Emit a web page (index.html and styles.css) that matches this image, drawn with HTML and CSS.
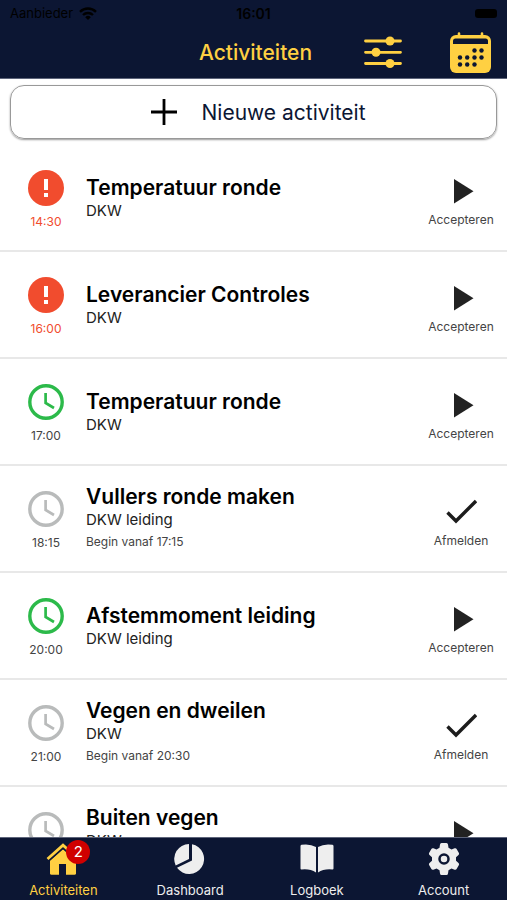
FILE: index.html
```
<!DOCTYPE html>
<html lang="nl">
<head>
  <meta charset="utf-8">
  <meta name="viewport" content="width=device-width, initial-scale=1">
  <title>Activiteiten</title>
  <link rel="stylesheet" href="styles.css">
</head>
<body>
  <!-- shared icons -->
  <svg class="sprite" aria-hidden="true">
    <symbol id="alert" viewBox="0 0 36 36">
      <circle cx="18" cy="18" r="18" fill="#f14c2e"/>
      <path d="M16 9h4v11h-4zM16 23h4v4h-4z" fill="#fff"/>
    </symbol>
    <symbol id="clock" viewBox="0 0 36 36">
      <circle cx="18" cy="18" r="16.2" fill="none" stroke="currentColor" stroke-width="3.4"/>
      <path d="M17.6 9v10l8.4 5" fill="none" stroke="currentColor" stroke-width="2.7"/>
    </symbol>
    <symbol id="play" viewBox="0 0 32 32">
      <path d="M9 4v24.500l19.500-12.250z" fill="#222"/>
    </symbol>
    <symbol id="check" viewBox="0 0 32 32">
      <path d="M2.500 16.500l8.500 8.500L31 5" fill="none" stroke="#1c1c1c" stroke-width="3.400"/>
    </symbol>
  </svg>

  <header class="header">
    <div class="status-bar">
      <span class="carrier">Aanbieder
        <svg width="18" height="13" viewBox="0 0 18 13">
          <path d="M1 4.800a11.500 11.500 0 0 1 16 0M4 8a7.200 7.200 0 0 1 10 0" fill="none" stroke="#000" stroke-width="2.400"/>
          <path d="M9 13L6.200 10.200a4 4 0 0 1 5.600 0z"/>
        </svg>
      </span>
      <span class="clock-time">16:01</span>
      <span class="battery"></span>
    </div>
    <div class="title-bar">
      <h1>Activiteiten</h1>
      <div class="header-buttons">
        <button aria-label="Filter">
          <svg width="38" height="32" viewBox="0 0 38 32">
            <path d="M1.500 5h35M1.500 16.300h35M1.500 27.500h35" stroke="#ffd042" stroke-width="2.800" stroke-linecap="round"/>
            <g fill="#ffd042"><circle cx="26" cy="5" r="4.500"/><circle cx="12" cy="16.300" r="4.500"/><circle cx="26" cy="27.500" r="4.500"/></g>
          </svg>
        </button>
        <button aria-label="Kalender">
          <svg width="41" height="41" viewBox="0 0 41 41">
            <path d="M9 1.500v4M32 1.500v4" stroke="#ffd042" stroke-width="2.600" stroke-linecap="round"/>
            <rect y="3" width="41" height="38" rx="6" fill="#ffd042"/>
            <path d="M5.500 6.500h30q2.500 0 2.500 2.500v3H3V9q0-2.500 2.500-2.500z" fill="#0c1633"/>
            <g fill="#0c1633">
              <circle cx="24.500" cy="18.500" r="2.200"/><circle cx="31.500" cy="18.500" r="2.200"/>
              <circle cx="10" cy="25.500" r="2.200"/><circle cx="17.200" cy="25.500" r="2.200"/><circle cx="24.500" cy="25.500" r="2.200"/><circle cx="31.500" cy="25.500" r="2.200"/>
              <circle cx="10" cy="32.500" r="2.200"/><circle cx="17.200" cy="32.500" r="2.200"/><circle cx="24.500" cy="32.500" r="2.200"/>
            </g>
          </svg>
        </button>
      </div>
    </div>
  </header>

  <main class="content">
    <button class="new-activity">
      <svg width="26" height="26" viewBox="0 0 26 26"><path d="M13 0v26M0 13h26" stroke="#000" stroke-width="2.800"/></svg>
      Nieuwe activiteit
    </button>

    <ul class="activities">
      <li class="activity late">
        <div class="status"><svg><use href="#alert"/></svg><time>14:30</time></div>
        <div class="info"><h2>Temperatuur ronde</h2><p>DKW</p></div>
        <button class="action"><svg><use href="#play"/></svg>Accepteren</button>
      </li>
      <li class="activity late">
        <div class="status"><svg><use href="#alert"/></svg><time>16:00</time></div>
        <div class="info"><h2>Leverancier Controles</h2><p>DKW</p></div>
        <button class="action"><svg><use href="#play"/></svg>Accepteren</button>
      </li>
      <li class="activity open">
        <div class="status"><svg><use href="#clock"/></svg><time>17:00</time></div>
        <div class="info"><h2>Temperatuur ronde</h2><p>DKW</p></div>
        <button class="action"><svg><use href="#play"/></svg>Accepteren</button>
      </li>
      <li class="activity">
        <div class="status"><svg><use href="#clock"/></svg><time>18:15</time></div>
        <div class="info"><h2>Vullers ronde maken</h2><p>DKW leiding</p><small>Begin vanaf 17:15</small></div>
        <button class="action"><svg><use href="#check"/></svg>Afmelden</button>
      </li>
      <li class="activity open">
        <div class="status"><svg><use href="#clock"/></svg><time>20:00</time></div>
        <div class="info"><h2>Afstemmoment leiding</h2><p>DKW leiding</p></div>
        <button class="action"><svg><use href="#play"/></svg>Accepteren</button>
      </li>
      <li class="activity">
        <div class="status"><svg><use href="#clock"/></svg><time>21:00</time></div>
        <div class="info"><h2>Vegen en dweilen</h2><p>DKW</p><small>Begin vanaf 20:30</small></div>
        <button class="action"><svg><use href="#check"/></svg>Afmelden</button>
      </li>
      <li class="activity">
        <div class="status"><svg><use href="#clock"/></svg><time>21:30</time></div>
        <div class="info"><h2>Buiten vegen</h2><p>DKW</p><small>Begin vanaf 21:00</small></div>
        <button class="action"><svg><use href="#play"/></svg>Accepteren</button>
      </li>
    </ul>
  </main>

  <nav class="tabs">
    <a class="active" href="#activiteiten">
      <span class="tab-icon">
        <svg width="34" height="34" viewBox="0 0 34 34" fill="#ffd042">
          <path d="M17 7L4 18.500V31q0 1.500 1.500 1.500H13V22h7v10.500h8.500q1.500 0 1.500-1.500V18.500z"/>
          <path d="M1.500 17L17 3.200 32.500 17" fill="none" stroke="#0c1633" stroke-width="6"/>
          <path d="M1.500 17L17 3.200 32.500 17" fill="none" stroke="#ffd042" stroke-width="2.800"/>
          <path d="M17 9L4 20.500V31q0 1.500 1.500 1.500H13V22h7v10.500h8.500q1.500 0 1.500-1.500V20.500z"/>
          <path d="M25 4h4v8l-4-3.500z"/>
        </svg>
        <span class="badge">2</span>
      </span>
      Activiteiten
    </a>
    <a href="#dashboard">
      <span class="tab-icon">
        <svg width="34" height="34" viewBox="0 0 34 34" fill="#eee">
          <path d="M16 2v15L2.700 23.500A15 15 0 0 1 16 2z"/>
          <path d="M19 2.200a15 15 0 1 1-15 23.600L19 18.600z"/>
        </svg>
      </span>
      Dashboard
    </a>
    <a href="#logboek">
      <span class="tab-icon">
        <svg width="34" height="34" viewBox="0 0 34 34" fill="#eee">
          <path d="M.5 4q0-1 1-1.200Q10 1.500 16 5v25.500Q10 26.500 1.500 27.500q-1 0-1-1zM33.500 4q0-1-1-1.200Q24 1.500 18 5v25.500q6-4 14.500-3 1 0 1-1z"/>
        </svg>
      </span>
      Logboek
    </a>
    <a href="#account">
      <span class="tab-icon">
        <svg width="34" height="34" viewBox="0 0 34 34">
          <path d="M13 2.500q.2-1.500 1.500-1.500h5q1.300 0 1.500 1.500l.5 3.300 3 1.700 3.100-1.200q1.400-.5 2 .6l2.300 4q.6 1.200-.4 2L29 15.200v3.600l2.500 2.300q1 .8.400 2l-2.300 4q-.6 1.100-2 .6l-3.100-1.200-3 1.700-.5 3.300q-.2 1.500-1.500 1.500h-5q-1.300 0-1.500-1.500l-.5-3.300-3-1.700-3.100 1.200q-1.400.5-2-.6l-2.300-4q-.6-1.200.4-2L5 18.800v-3.600l-2.500-2.300q-1-.8-.4-2l2.300-4q.6-1.100 2-.6l3.100 1.200 3-1.700z" fill="#eee"/>
          <circle cx="17" cy="17" r="4.500" fill="#eee" stroke="#0c1633" stroke-width="2.500"/>
        </svg>
      </span>
      Account
    </a>
  </nav>
</body>
</html>
```
FILE: styles.css
```
* {
  margin: 0;
  padding: 0;
  box-sizing: border-box;
}

body {
  font-family: Inter, "Liberation Sans", sans-serif;
  display: flex;
  flex-direction: column;
  height: 100vh;
  overflow: hidden;
  background-color: #fff;
  color: #000;
}

button {
  font-family: inherit;
  color: inherit;
  border: none;
  background: none;
  cursor: pointer;
}

svg {
  display: block;
}

.sprite {
  position: absolute;
  width: 0;
  height: 0;
}

/* header */
.header {
  flex: none;
  background-color: #0c1633;
  border-bottom: 1px solid #5d647a;
}

.status-bar,
.title-bar {
  display: grid;
  grid-template-columns: 1fr auto 1fr;
  align-items: center;
}

.status-bar {
  height: 26px;
  padding: 0 10px;
  font-size: 13px;
}

.carrier {
  display: flex;
  align-items: center;
  gap: 6px;
}

.clock-time {
  font-size: 14px;
  font-weight: 600;
}

.battery {
  justify-self: end;
  width: 22px;
  height: 9px;
  border-radius: 3px;
  background-color: #000;
}

.title-bar {
  height: 52px;
  padding: 0 16px 0 20px;
}

.title-bar h1 {
  grid-column: 2;
  font-size: 21px;
  font-weight: 500;
  color: #ffd042;
}

.header-buttons {
  display: flex;
  justify-content: flex-end;
  align-items: center;
  gap: 48px;
}

/* activity list */
.content {
  flex: 1;
  min-height: 0;
  display: flex;
  flex-direction: column;
}

.new-activity {
  flex: none;
  display: flex;
  align-items: center;
  justify-content: center;
  gap: 24px;
  height: 54px;
  margin: 6px 10px;
  padding-left: 10px;
  border: 1px solid #999;
  border-radius: 14px;
  box-shadow: 0 1px 2px rgba(0, 0, 0, 0.4);
  font-size: 21px;
  color: #0c1633;
}

.activities {
  list-style: none;
  overflow-y: auto;
  scrollbar-width: none;
}

.activity {
  display: flex;
  align-items: center;
  height: 107px;
  border-bottom: 2px solid #e8e8e8;
  color: #444;
}

.status {
  flex: none;
  width: 86px;
  padding: 4px 0 0 6px;
  display: flex;
  flex-direction: column;
  align-items: center;
  gap: 8px;
  font-size: 12px;
  line-height: 16px;
}

.status svg {
  width: 36px;
  height: 36px;
  color: #b9bbbb;
}

.open .status svg {
  color: #2cba4a;
}

.late .status {
  color: #f14c2e;
}

.info {
  flex: 1;
}

.info h2 {
  font-size: 21px;
  line-height: 26px;
  font-weight: 600;
  color: #000;
}

.info p {
  font-size: 15px;
  line-height: 20px;
  color: #222;
}

.info small {
  display: block;
  font-size: 12px;
  line-height: 24px;
}

.action {
  flex: none;
  width: 92px;
  padding-top: 8px;
  display: flex;
  flex-direction: column;
  align-items: center;
  gap: 5px;
  font-size: 12px;
  line-height: 16px;
}

.action svg {
  width: 32px;
  height: 32px;
}

/* bottom tabs */
.tabs {
  flex: none;
  display: grid;
  grid-template-columns: repeat(4, 1fr);
  height: 63px;
  padding-top: 4px;
  background-color: #0c1633;
  border-top: 1px solid #5d647a;
}

.tabs a {
  display: flex;
  flex-direction: column;
  align-items: center;
  gap: 5px;
  font-size: 13px;
  line-height: 18px;
  color: #eee;
  text-decoration: none;
}

.tabs .active {
  color: #ffd042;
}

.tab-icon {
  position: relative;
}

.badge {
  position: absolute;
  top: -2px;
  right: -10px;
  width: 24px;
  height: 24px;
  border-radius: 50%;
  background-color: #d00000;
  color: #fff;
  font-size: 15px;
  line-height: 24px;
  text-align: center;
}
```
